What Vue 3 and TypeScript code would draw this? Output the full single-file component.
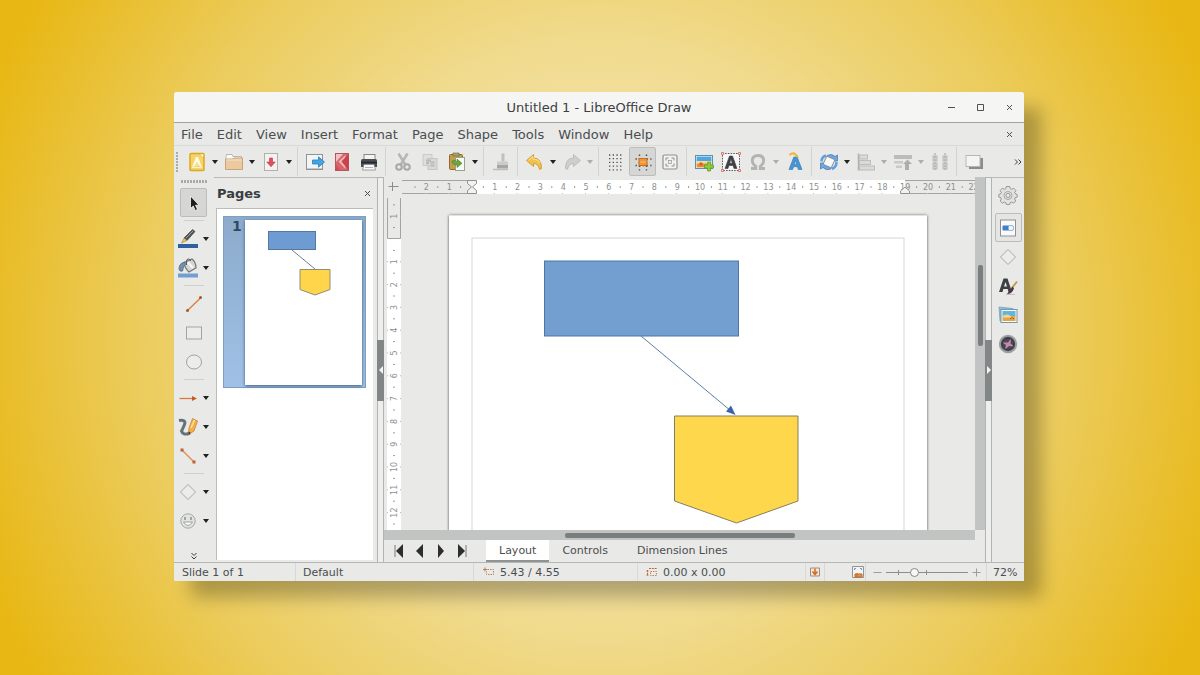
<script setup lang="ts">
import { ref } from 'vue'

interface Tool {
  id: string
  label: string
  menu?: boolean
  off?: boolean
  pressed?: boolean
}

const menus: string[] = ['File', 'Edit', 'View', 'Insert', 'Format', 'Page', 'Shape', 'Tools', 'Window', 'Help']

const toolGroups: Tool[][] = [
  [
    { id: 'new', label: 'New', menu: true },
    { id: 'open', label: 'Open', menu: true },
    { id: 'save', label: 'Save', menu: true },
  ],
  [
    { id: 'export', label: 'Export' },
    { id: 'pdf', label: 'Export as PDF' },
    { id: 'print', label: 'Print' },
  ],
  [
    { id: 'cut', label: 'Cut', off: true },
    { id: 'copy', label: 'Copy', off: true },
    { id: 'paste', label: 'Paste', menu: true },
  ],
  [{ id: 'clone', label: 'Clone Formatting', off: true }],
  [
    { id: 'undo', label: 'Undo', menu: true },
    { id: 'redo', label: 'Redo', menu: true, off: true },
  ],
  [
    { id: 'grid', label: 'Display Grid' },
    { id: 'snap', label: 'Helplines While Moving', pressed: true },
    { id: 'zoompan', label: 'Zoom and Pan' },
  ],
  [
    { id: 'image', label: 'Insert Image' },
    { id: 'textbox', label: 'Insert Text Box' },
    { id: 'omega', label: 'Special Character', menu: true, off: true },
    { id: 'fontwork', label: 'Fontwork' },
  ],
  [
    { id: 'transform', label: 'Transformations', menu: true },
    { id: 'align', label: 'Align', menu: true, off: true },
    { id: 'arrange', label: 'Arrange', menu: true, off: true },
    { id: 'distribute', label: 'Distribute', off: true },
  ],
  [{ id: 'shadow', label: 'Shadow' }],
]

const drawGroups: Tool[][] = [
  [{ id: 'select', label: 'Select', pressed: true }],
  [
    { id: 'pen', label: 'Line Color', menu: true },
    { id: 'fill', label: 'Fill Color', menu: true },
  ],
  [
    { id: 'line', label: 'Line' },
    { id: 'rect', label: 'Rectangle' },
    { id: 'ellipse', label: 'Ellipse' },
  ],
  [
    { id: 'arrow', label: 'Lines and Arrows', menu: true },
    { id: 'curve', label: 'Curves and Polygons', menu: true },
    { id: 'connector', label: 'Connectors', menu: true },
  ],
  [
    { id: 'diamond', label: 'Basic Shapes', menu: true },
    { id: 'smiley', label: 'Symbol Shapes', menu: true },
  ],
]

const decks: Tool[] = [
  { id: 'gear', label: 'Sidebar Settings' },
  { id: 'props', label: 'Properties', pressed: true },
  { id: 'diamond', label: 'Shapes' },
  { id: 'styles', label: 'Styles' },
  { id: 'gallery', label: 'Gallery' },
  { id: 'navigator', label: 'Navigator' },
]

const layers: string[] = ['Layout', 'Controls', 'Dimension Lines']
const activeLayer = ref('Layout')
const zoom = ref(33)

/* Inner markup of the 20x20 toolbar icons */
const icons: Record<string, string> = {
  new: '<rect x="3" y="1.500" width="14" height="17" rx="1" fill="#f6d468" stroke="#dca824" stroke-width="1.500"/><path d="M5 15.500 L9 5 h2 L15 15.500 L12.500 14 L10 10 L7.500 14z" fill="#fffbe8"/><path d="M7.500 14 L10 10 L12.500 14z" fill="#f9e18e"/><path d="M5 15.500h10" stroke="#fdf3c8"/><path d="M12.500 2h4v4z" fill="#fff" stroke="#dca824" stroke-width=".6"/>',
  open: '<path d="M2 4.500 L2.500 2.500 H8 L9 4.500 H17.500 V8 H2z" fill="#fafafa" stroke="#aaa" stroke-width=".8"/><path d="M1.500 7 H9 L10 6 H18.500 V17.500 H1.500z" fill="#ecca9f" stroke="#c9a478"/><path d="M2.500 8h15" stroke="#f8e2c6"/>',
  save: '<rect x="3.500" y="1.500" width="13" height="17" fill="#f2f2f1" stroke="#b0b0b0"/><path d="M8.500 6 h3v4h2.700L10 14.800 5.800 10H8.500z" fill="#dc5060" stroke="#c03a4c" stroke-width=".6"/>',
  export: '<rect x="1.500" y="2.500" width="16" height="15" fill="#f3f4f4" stroke="#8f9394"/><path d="M2 16.500h15" stroke="#c4c8ca"/><path d="M7.500 8h6V4.800L19.500 10l-6 5.200V12h-6z" fill="#45a3e2" stroke="#2a7fbc" stroke-width=".8"/>',
  pdf: '<rect x="3.500" y="1.500" width="13" height="17" fill="#d8636b" stroke="#b9525a"/><path d="M4 2h7L4 10z" fill="#efc3c4"/><path d="M13.500 3 L6.500 9.500 L13.500 17z" fill="#eeb4b6"/><path d="M16.500 2 L9.500 9.500 L16.500 18z" fill="#c8424e"/><path d="M4 13l4 5H4z" fill="#cf4f59"/>',
  print: '<rect x="5" y="2.500" width="11" height="6" fill="#f4f4f4" stroke="#888"/><path d="M2 8.500 Q2 7 3.500 7 h13 Q18 7 18 8.500 V15 H2z" fill="#474d50"/><path d="M2 10.500h16" stroke="#24282a" stroke-width="1.500"/><path d="M5 12.500h10l1.500 5.500h-13z" fill="#f8f8f8" stroke="#8c8c8c" stroke-width=".8"/><path d="M6 15.500h8" stroke="#b4b4b4"/>',
  cut: '<path d="M5.500 1.500 L12.500 13 M14.500 1.500 L7.500 13" stroke="#b6b6b5" stroke-width="2.500"/><circle cx="6" cy="15" r="2.800" fill="none" stroke="#a8a8a8" stroke-width="2"/><circle cx="14" cy="15" r="2.800" fill="none" stroke="#a8a8a8" stroke-width="2"/>',
  copy: '<rect x="3" y="2.500" width="9" height="11" fill="#dfdfde" stroke="#cacac9"/><rect x="8" y="6.500" width="9" height="11" fill="#d8d8d7" stroke="#c6c6c5"/><path d="M6 8.500h5M6 11h3M10.500 10.500h4M10.500 13.500h4" stroke="#b9b9b8" stroke-width="2"/>',
  paste: '<rect x="2.500" y="2.500" width="13" height="15" rx="1" fill="#c79b4e" stroke="#8d6b2c"/><rect x="6" y="1" width="6" height="3" fill="#a3a56a" stroke="#686a3a" stroke-width=".6"/><rect x="8.500" y="5.500" width="9" height="13" fill="#f7f9f4" stroke="#96a38c"/><path d="M5 9 q0 4 5 4 v2.500 l5-4.200 -5-4.200 v2.600 q-2 0-2-1.500z" fill="#6da63e" stroke="#4d8128" stroke-width=".6"/>',
  clone: '<path d="M12 1.500v8" stroke="#c0c0bf" stroke-width="3"/><path d="M6 9.500h11v4H6z" fill="#cbcbca"/><path d="M6 13h11v3.500H6z" fill="#a6a6a6"/><path d="M2 17.500h15" stroke="#bdbdbc" stroke-width="1.500"/>',
  undo: '<path d="M1.500 8.500 L8.500 2.500 V6 Q16.500 6 16.500 16.500 L14.500 17.500 Q13.500 11.500 8.500 11.500 V14.500z" fill="#f2c14a" stroke="#cf9a2c" stroke-width=".9"/><path d="M3.500 8.300 L8 4.500 V7.200 Q13 7 15 11" fill="none" stroke="#fbe3a0"/>',
  redo: '<path d="M18.500 8.500 L11.500 2.500 V6 Q3.500 6 3.500 16.500 L5.500 17.500 Q6.500 11.500 11.500 11.500 V14.500z" fill="#cdcecd" stroke="#bababa" stroke-width=".9"/>',
  grid: '<g stroke="#4c5052" stroke-width="1.300" stroke-dasharray="1.300 2.400"><path d="M3 3h14.500M3 6.700h14.500M3 10.400h14.500M3 14.100h14.500M3 17.800h14.500"/></g>',
  snap: '<g stroke="#4c5052" stroke-width="1.400" stroke-dasharray="1.400 2.300"><path d="M2.500 7h16M2.500 13.500h16M6.500 2.500v16M13.500 2.500v16"/></g><rect x="6" y="6.500" width="8" height="7" fill="#f0953a" stroke="#ca6e18"/><path d="M7.500 10h5" stroke="#f9c27e"/>',
  zoompan: '<rect x="3" y="3" width="14" height="14" rx="1.500" fill="#f2f2f1" stroke="#8e9294" stroke-width="1.200"/><path d="M6 8.500V6h2.500M11.500 6H14v2.500M14 11.500V14h-2.500M8.500 14H6v-2.500" fill="none" stroke="#8a8e90"/><rect x="8.500" y="8.500" width="3" height="3" fill="none" stroke="#9a9e9f" stroke-width=".8"/>',
  image: '<rect x="1.500" y="3.500" width="17" height="13" fill="#fff" stroke="#5d90b5"/><rect x="2.500" y="4.500" width="15" height="6" fill="#50a7de"/><path d="M2.500 9 h15 v3 h-15z" fill="#f4dca0"/><rect x="2.500" y="11.500" width="15" height="4" fill="#df9438"/><circle cx="7" cy="12" r="1.800" fill="#e15a26"/><path d="M13.500 10h3v3h3v3h-3v3h-3v-3h-3v-3h3z" fill="#8ccc3c" stroke="#5e9822" stroke-width=".7"/>',
  textbox: '<rect x="1.500" y="1.500" width="17" height="17" fill="#f7f7f7" stroke="#555" stroke-dasharray="1.500 1.200"/><path d="M4 16.500 L8.500 4 h3 L16 16.500 h-3 l-.9-3 H7.900 L7 16.500z M8.700 11.200h2.600L10 7z" fill="#3d4144" fill-rule="evenodd" stroke="#3d4144" stroke-width=".6"/><g fill="#f3eeee" stroke="#d25346"><circle cx="1.500" cy="1.500" r="1.200"/><circle cx="18.500" cy="1.500" r="1.200"/><circle cx="1.500" cy="18.500" r="1.200"/><circle cx="18.500" cy="18.500" r="1.200"/></g>',
  omega: '<path d="M3 16.500h4.800v-2.200Q4.300 12 4.300 8.800 4.300 3.500 10 3.500t5.700 5.300q0 3.200-3.500 5.500v2.200H17" fill="none" stroke="#b2b3b3" stroke-width="2.800"/>',
  fontwork: '<path d="M4 17.500 L8.800 5 h3.400 L17 17.500 h-3.700 l-.9-2.800 H8.500 L7.600 17.500z M9.300 12.300h2.300L10.500 8.600z" fill="#4795d4" fill-rule="evenodd" stroke="#2f78b4" stroke-width=".6"/><path d="M4.500 3 Q8 0 10.500 2.500 T13 5.500" fill="none" stroke="#f0b53c" stroke-width="2"/>',
  transform: '<path d="M2.500 9.500 Q2.500 5 7 3.500 M17.500 10 Q17.500 15 13 17" fill="none" stroke="#5f9fdf" stroke-width="2.500"/><path d="M8 3.500 Q13 1 16 4.500 L18.500 3 V9 H12.500 L14.500 6.500 Q12 4.500 8 6z" fill="#6ca8e4" stroke="#3b76b4" stroke-width=".7"/><path d="M12 17 Q7 19 4 15.500 L1.500 17 V11 H7.500 L5.500 13.500 Q8 15.500 12 14z" fill="#6ca8e4" stroke="#3b76b4" stroke-width=".7"/><rect x="5.500" y="5.500" width="9" height="9" rx="1" transform="rotate(25 10 10)" fill="#f8f8f8" stroke="#8e9496"/>',
  align: '<path d="M2.500 1.500v17" stroke="#b0b1b1" stroke-width="1.500"/><g fill="#dadad9" stroke="#bcbdbc"><rect x="3.500" y="3" width="8" height="4"/><rect x="3.500" y="8.500" width="11" height="4"/><rect x="3.500" y="14" width="15" height="4"/></g>',
  arrange: '<path d="M1 3h18v4H1z" fill="#bbbcbb"/><path d="M1 9h9v2.500H1zM3 13.500h6v2.500H3z" fill="#c9caca"/><path d="M12 18v-6h-2l4.500-4.500L19 12h-3v6z" fill="#acadad"/>',
  distribute: '<g fill="#cfcfce" stroke="#bbbcbb"><rect x="3" y="4" width="4" height="5"/><rect x="3" y="11" width="4" height="6"/><rect x="13" y="4" width="4" height="5"/><rect x="13" y="11" width="4" height="6"/></g><path d="M5 1v18M15 1v18" stroke="#b0b1b1" stroke-width="1.300" stroke-dasharray="2 1"/>',
  shadow: '<rect x="5" y="6" width="14" height="11" fill="#8a8d8e"/><rect x="2" y="3.500" width="14" height="11" fill="#f4f4f3" stroke="#b5b7b7"/>',
  select: '<path d="M6.500 3 V15.500 L9.300 13 L11.200 17.500 L13.500 16.500 L11.500 12.200 H15z" fill="#1c1e1f" stroke="#f8f8f8" stroke-width=".8"/>',
  pen: '<path d="M6 9 L14.500 .5 L17 2.500 L9 11.500z" fill="#53575a" stroke="#323638" stroke-width=".6"/><path d="M8 9 L15 2" stroke="#9a9ea0"/><path d="M6 9 L9 11.500 L3.500 14z" fill="#e5c25a" stroke="#8c7430" stroke-width=".5"/><rect x="0" y="15" width="20" height="4" fill="#2f61a0"/>',
  fill: '<path d="M6 4.500 L14 1 Q18 4 18 10 L11 14 Q6.500 10 6 4.500z" fill="#d3d5d6" stroke="#707476" stroke-width="1.200"/><path d="M10 4.500 L15 10" stroke="#f7f7f7" stroke-width="2.500"/><path d="M8.500 7V3Q8.500 1 10.500 1t2 2" fill="none" stroke="#5a5e60"/><path d="M1 11 Q1 5 7 4 L7.500 6.500 Q5 8 4.500 13 Q1.500 14 1 11z" fill="#7390ad" stroke="#56646f" stroke-width=".8"/><rect x="0" y="15.500" width="20" height="4" fill="#729fcf"/>',
  line: '<path d="M3.500 16.500 L17 3.500" stroke="#dc7c3c" stroke-width="1.300"/><circle cx="3.500" cy="16.500" r="1.500" fill="#a65530"/><circle cx="16.500" cy="3.500" r="1.500" fill="#a65530"/>',
  rect: '<rect x="2.500" y="4" width="15" height="12" fill="#ececeb" stroke="#a1a4a4"/>',
  ellipse: '<ellipse cx="10" cy="10" rx="7.500" ry="7" fill="#ececeb" stroke="#a1a4a4"/>',
  arrow: '<path d="M1.500 10.500h15" stroke="#dc7c3c" stroke-width="1.300"/><path d="M14 8l5 2.500-5 2.500z" fill="#c05d28"/>',
  curve: '<path d="M1 3.500 Q8.500 2.500 6.500 7.500 T3.500 14 Q5 19 12 16" fill="none" stroke="#66727a" stroke-width="3"/><path d="M14.500 1.500 L19.500 4 L16 14 L10.500 17.500 L11 11z" fill="#f2b044" stroke="#c47a2c" stroke-width=".7"/><path d="M13 11L16.500 3" stroke="#fcdf9a" stroke-width="1.500"/><path d="M10.500 17.500l.3-3 2 1.600z" fill="#333"/>',
  connector: '<path d="M4 4 L16 16" stroke="#e08a50" stroke-width="1.300"/><rect x="2.500" y="2.500" width="3" height="3" fill="#bd6334"/><rect x="14.500" y="14.500" width="3" height="3" fill="#bd6334"/>',
  diamond: '<path d="M10 2.500 L17.500 10 L10 17.500 L2.500 10z" fill="#ececeb" stroke="#a6a8a8"/>',
  smiley: '<circle cx="10" cy="10" r="7.200" fill="#e2e3e3" stroke="#a6a8a8"/><path d="M7 6v3M13 6v3" stroke="#8d9090" stroke-width="1.500"/><path d="M5.500 11q4.500 7 9 0z" fill="#fafafa" stroke="#8d9090" stroke-width=".8"/>',
  gear: '<path d="M8.300 1.500h3.400l.6 2.300 1.300.6 2.100-1.200 2.200 2.300-1.200 2 .5 1.300 2 .6v2.600l-2.100.7-.5 1.300 1.100 2-2.200 2.200-2-1.100-1.300.5-.5 1.900H8.300l-.6-1.900-1.300-.5-2 1.100L2.200 16l1.100-2-.5-1.300-2-.7V9.400l2-.6.6-1.300-1.200-2 2.200-2.300 2.100 1.200 1.200-.6z" fill="#e2e2e1" stroke="#949797"/><circle cx="10" cy="10.500" r="4" fill="none" stroke="#a4a7a7"/><circle cx="10" cy="10.500" r="2" fill="#f0f0f0" stroke="#949797"/>',
  props: '<rect x="2.500" y="2" width="15" height="16" fill="#f9f9f9" stroke="#8f9294"/><rect x="4.500" y="7.500" width="11" height="5" rx="1" fill="#3f80c8"/><rect x="10.500" y="8" width="4.500" height="4" rx="1" fill="#eef4fa"/>',
  styles: '<path d="M1 16 L5.500 2.500 h4 L14 16 h-3.500 l-.8-3 H5.300 L4.500 16z M6 10.500h3L7.500 6z" fill="#3d4144" fill-rule="evenodd"/><path d="M19 5.500 L14 12" stroke="#c49a4a" stroke-width="2"/><path d="M14.500 10.500 L9 18 q5 0 7-5.500z" fill="#4e3344"/><path d="M8 18.500h9" stroke="#d2b3ca"/>',
  gallery: '<path d="M1 2 L15 3.500 L14 14 L2 16z" fill="#8cc0dc" stroke="#6f9cb6" stroke-width=".7"/><rect x="3" y="4.500" width="16" height="13" fill="#fbfbf8" stroke="#7596a8"/><rect x="4.500" y="6" width="13" height="5.500" fill="#62b6dc"/><path d="M4.500 11h13v5h-13z" fill="#e2a648"/><path d="M4.500 11 q5-3 8 0 t5 0 v1.500 h-13z" fill="#f5d794"/><path d="M12 14q2-3 4 0" stroke="#b5552a" fill="none"/>',
  navigator: '<circle cx="10" cy="10" r="8.200" fill="#4a4857" stroke="#9da0a2" stroke-width="2"/><path d="M4.500 8.500 L10 8.500 L13 4.500 L12.500 9.500 L16 12.500 L11 12 L7 15.500 L8 11z" fill="#c58aa8"/><circle cx="10" cy="10" r="5.800" fill="none" stroke="#3a3846"/>',
}

/* Rulers: one unit is one centimetre */
const CM = 22.8
interface Mark {
  pos: number
  text: string
}
function marks(from: number, to: number, zero: number): Mark[] {
  const list: Mark[] = []
  for (let n = from; n <= to; n++) {
    if (n !== 0) list.push({ pos: zero + n * CM, text: String(Math.abs(n)) })
  }
  return list
}
function halves(from: number, to: number, zero: number): number[] {
  const list: number[] = []
  for (let n = from; n < to; n++) list.push(zero + (n + 0.5) * CM)
  return list
}
const hMarks = marks(-2, 22, 70)
const hHalves = halves(-3, 22, 70)
const vMarks = marks(-1, 12, 41)
const vHalves = halves(-2, 13, 41)
</script>

<template>
  <main class="desktop">
    <section class="window">
      <header class="titlebar">
        <h1>Untitled 1 - LibreOffice Draw</h1>
        <div class="controls">
          <button aria-label="Minimize"><svg viewBox="0 0 9 9"><path d="M1 4.500h7" /></svg></button>
          <button aria-label="Maximize"><svg viewBox="0 0 9 9"><path d="M1.500 1.500h6v6h-6z" /></svg></button>
          <button aria-label="Close"><svg viewBox="0 0 9 9"><path d="M2 2l5 5M7 2l-5 5" /></svg></button>
        </div>
      </header>

      <nav class="menubar">
        <button v-for="m in menus" :key="m">{{ m }}</button>
        <button class="doc-close" aria-label="Close Document">
          <svg viewBox="0 0 9 9"><path d="M2 2l5 5M7 2l-5 5" /></svg>
        </button>
      </nav>

      <div class="toolbar">
        <i class="grip"></i>
        <div v-for="(group, gi) in toolGroups" :key="gi" class="group">
          <template v-for="t in group" :key="t.id">
            <button class="tool" :class="{ pressed: t.pressed }" :aria-label="t.label">
              <svg viewBox="0 0 20 20" v-html="icons[t.id]"></svg>
            </button>
            <button v-if="t.menu" class="caret" :class="{ off: t.off }" :aria-label="t.label + ' options'"></button>
          </template>
        </div>
        <button class="more" aria-label="More tools">
          <svg viewBox="0 0 8 8"><path d="M1 1.500l2.500 2.500L1 6.500M4.500 1.500L7 4 4.500 6.500" /></svg>
        </button>
      </div>

      <div class="workspace">
        <aside class="drawbar">
          <i class="grip"></i>
          <div v-for="(group, gi) in drawGroups" :key="gi" class="group">
            <div v-for="t in group" :key="t.id" class="row" :class="{ split: t.menu }">
              <button class="tool" :class="{ pressed: t.pressed }" :aria-label="t.label">
                <svg viewBox="0 0 20 20" v-html="icons[t.id]"></svg>
              </button>
              <button v-if="t.menu" class="caret" :aria-label="t.label + ' options'"></button>
            </div>
          </div>
          <button class="more" aria-label="More drawing tools">
            <svg viewBox="0 0 8 8"><path d="M1.500 1l2.500 2.500L6.500 1M1.500 4.500L4 7l2.500-2.500" /></svg>
          </button>
        </aside>

        <section class="pages">
          <header>
            <h2>Pages</h2>
            <button aria-label="Close Pages"><svg viewBox="0 0 9 9"><path d="M2 2l5 5M7 2l-5 5" /></svg></button>
          </header>
          <div class="page-list">
            <button class="thumb" aria-label="Page 1">
              <span>1</span>
              <svg viewBox="0 0 117 165">
                <rect width="117" height="165" fill="#fff" />
                <rect x="23.500" y="11.500" width="47" height="18" fill="#6e9bd1" stroke="#54779f" />
                <path d="M47 30L70 49" stroke="#6c7f96" fill="none" />
                <path d="M55 49.500h30v20l-15 5.500-15-5.500z" fill="#fed54b" stroke="#8f8e74" />
              </svg>
            </button>
          </div>
        </section>

        <div class="splitter"><i class="grab left"></i></div>

        <section class="editor">
          <div class="sheet-area">
            <div class="corner"><svg viewBox="0 0 11 11"><path d="M.5 5.500h10M4.500 1v9" /></svg></div>
            <svg class="hruler">
              <rect x="70" y="0" width="433" height="14" fill="#fff" />
              <path d="M0 .5H70M0 13.500H70M503 .5H2000M503 13.500H2000" stroke="#a3a5a5" />
              <text v-for="m in hMarks" :key="m.pos" :x="m.pos" y="10">{{ m.text }}</text>
              <path v-for="p in hHalves" :key="p" :d="`M${p} 6v2`" stroke="#9a9c9c" />
              <path v-for="m in hMarks" :key="'q' + m.pos" :d="`M${m.pos - 0.5} 13v1`" stroke="#c4c6c6" />
              <path d="M65.500 .5h9v3l-4 3.500 4 3.500v3h-9v-3l4-3.500-4-3.500z" fill="#f2f2f1" stroke="#8f9191" />
              <path d="M503 7l4.500 4v2.500h-9V11z" fill="#f2f2f1" stroke="#8f9191" />
            </svg>
            <svg class="vruler">
              <rect x="0" y="41" width="14" height="2000" fill="#fff" />
              <path d="M.5 0V40.500H13.500V0" fill="none" stroke="#a3a5a5" />
              <text v-for="m in vMarks" :key="m.pos" :transform="`translate(10 ${m.pos}) rotate(-90)`">{{ m.text }}</text>
              <path v-for="p in vHalves" :key="p" :d="`M6 ${p}h2`" stroke="#9a9c9c" />
              <path v-for="m in vMarks" :key="'q' + m.pos" :d="`M0 ${m.pos}h1M13 ${m.pos}h1`" stroke="#b4b6b6" />
            </svg>
            <svg class="canvas">
              <defs>
                <filter id="page-shadow" x="-5%" y="-5%" width="110%" height="110%">
                  <feDropShadow dx="0" dy="0" stdDeviation="1.500" flood-color="#000" flood-opacity=".7" />
                </filter>
              </defs>
              <rect x="47" y="20.500" width="478" height="676" fill="#fff" filter="url(#page-shadow)" />
              <rect x="70" y="43" width="432" height="630" fill="none" stroke="#d4d5d5" />
              <rect x="142.500" y="66" width="194" height="75" fill="#729fcf" stroke="#4f75a5" />
              <path d="M239 141L329 216" stroke="#5d7ca6" fill="none" />
              <path d="M333.500 220l-9.500-3.500 5-6z" fill="#3a66a3" />
              <path d="M272.500 221h123.500v85L334.500 328l-62-22z" fill="#ffd74c" stroke="#857f62" />
            </svg>
          </div>
          <div class="vscroll"><i></i></div>
          <div class="hscroll"><i></i></div>
          <div class="tabs">
            <div class="nav">
              <button aria-label="First"><svg viewBox="0 0 12 14"><path class="bar" d="M2 1v12" /><path d="M10 0v14L3 7z" /></svg></button>
              <button aria-label="Previous"><svg viewBox="0 0 12 14"><path d="M9 0v14L2 7z" /></svg></button>
              <button aria-label="Next"><svg viewBox="0 0 12 14"><path d="M3 0v14l6-7z" /></svg></button>
              <button aria-label="Last"><svg viewBox="0 0 12 14"><path class="bar" d="M10 1v12" /><path d="M2 0v14l7-7z" /></svg></button>
            </div>
            <button
              v-for="l in layers"
              :key="l"
              class="tab"
              :class="{ active: l === activeLayer }"
              @click="activeLayer = l"
            >{{ l }}</button>
          </div>
        </section>

        <div class="splitter"><i class="grab right"></i></div>

        <aside class="sidebar">
          <button v-for="d in decks" :key="d.id" class="tool" :class="{ pressed: d.pressed }" :aria-label="d.label">
            <svg viewBox="0 0 20 20" v-html="icons[d.id]"></svg>
          </button>
        </aside>
      </div>

      <footer class="status">
        <span class="slide">Slide 1 of 1</span>
        <span class="style">Default</span>
        <span class="coord">
          <svg viewBox="0 0 12 10"><path d="M0 2.500h4M2 .5v4" stroke="#c87a4a" /><path d="M4.500 2.500h6v5h-7v-3" stroke="#b9866c" stroke-dasharray="1.500 1" /></svg>
          5.43 / 4.55
        </span>
        <span class="size">
          <svg viewBox="0 0 12 10"><path d="M3 1.500h8M1.500 3v6M.5 4h2M.5 8h2" stroke="#c8662c" stroke-dasharray="2 .8" /><path d="M4.500 4.500h6v4h-6z" stroke="#b9866c" stroke-dasharray="1.500 1" /></svg>
          0.00 x 0.00
        </span>
        <span class="mark">
          <svg viewBox="0 0 12 10"><path d="M1.500 1h9v8h-9z" fill="#f3e6da" stroke="#a68b76" /><path d="M6 1.500v5M3.500 4.500L6 7.500l2.500-3" stroke="#cf6c20" stroke-width="1.500" /></svg>
        </span>
        <span class="fit">
          <svg viewBox="0 0 12 12"><path d="M.5 .5h11v11H.5z" fill="#f4f4f4" stroke="#909496" /><path d="M2.500 4V2.500H4M8 2.500h1.500V4" stroke="#7d92a8" /><path d="M3 8h7v3H3zM5 7v4" fill="#e39248" stroke="#c26a28" /></svg>
        </span>
        <div class="zoom">
          <button aria-label="Zoom out"><svg viewBox="0 0 9 9"><path d="M.5 4.500h8" /></svg></button>
          <input v-model="zoom" type="range" min="0" max="100" aria-label="Zoom" />
          <button aria-label="Zoom in"><svg viewBox="0 0 9 9"><path d="M.5 4.500h8M4.500 .5v8" /></svg></button>
        </div>
        <span class="percent">72%</span>
      </footer>
    </section>
  </main>
</template>

<style>
body {
  margin: 0;
}
</style>

<style scoped>
.desktop {
  box-sizing: border-box;
  height: 100vh;
  min-height: 560px;
  padding: 92px 176px 94px 174px;
  display: flex;
  background: radial-gradient(circle at 50% 50%, #f8f0d4 0, #f0da8c 300px, #ebcb5a 470px, #e8b713 660px);
  font-family: 'DejaVu Sans', sans-serif;
  color: #4a4e50;
}
button {
  appearance: none;
  border: 0;
  margin: 0;
  padding: 0;
  background: none;
  font: inherit;
  color: inherit;
}
svg {
  display: block;
  fill: none;
}
.window {
  flex: 1;
  min-width: 0;
  display: flex;
  flex-direction: column;
  background: #e9e9e7;
  border-radius: 3px 3px 0 0;
  box-shadow: 17px 16px 18px rgba(0, 0, 0, 0.27);
}

/* title */
.titlebar {
  height: 30px;
  display: grid;
  grid-template-columns: 86px 1fr 86px;
  align-items: center;
  background: #f5f5f4;
  border-bottom: 1px solid #a0a29c;
  border-radius: 3px 3px 0 0;
}
h1 {
  grid-column: 2;
  margin: 0;
  text-align: center;
  font-size: 13px;
  font-weight: 400;
  color: #3c4042;
}
.controls {
  display: flex;
  gap: 20px;
}
.controls svg,
.doc-close svg,
.pages header svg {
  width: 9px;
  height: 9px;
  stroke: #4c5052;
}
.controls button:first-child {
  margin-left: 9px;
}

/* menu */
.menubar {
  height: 22px;
  display: flex;
  align-items: center;
  gap: 14px;
  padding: 0 10px 0 7px;
  border-bottom: 1px solid #d9d9d7;
  font-size: 13px;
}
.doc-close {
  margin-left: auto;
}

/* toolbar */
.toolbar {
  height: 31px;
  display: flex;
  align-items: center;
}
.toolbar > .grip {
  width: 4px;
  height: 20px;
  margin: 0 3px 0 2px;
  background: repeating-linear-gradient(#a9abab 0 2px, transparent 2px 3px) 0 0 / 2px 100% no-repeat;
}
.toolbar .group {
  display: flex;
  align-items: center;
}
.toolbar .group + .group {
  padding-left: 3px;
  margin-left: 3px;
  border-left: 1px solid #d3d3d1;
}
.tool {
  box-sizing: border-box;
  width: 27px;
  height: 29px;
  display: grid;
  place-items: center;
  border-radius: 2px;
}
.tool svg {
  width: 20px;
  height: 20px;
}
.tool.pressed {
  background: #d6d6d4;
  border: 1px solid #bcbdbb;
}
.caret {
  width: 10px;
  height: 29px;
  display: grid;
  place-items: center;
}
.caret::before {
  content: '';
  border: 3px solid transparent;
  border-top: 4px solid #1f2122;
  border-bottom: 0;
}
.caret.off::before {
  border-top-color: #acadad;
}
.more svg {
  width: 8px;
  height: 8px;
  stroke: #3a3e40;
}
.toolbar .more {
  margin: 0 2px 0 auto;
}

/* workspace */
.workspace {
  flex: 1;
  min-height: 0;
  display: flex;
  border-bottom: 1px solid #b6b7b5;
}
.drawbar {
  width: 40px;
  display: flex;
  flex-direction: column;
}
.drawbar > .grip {
  width: 26px;
  height: 3px;
  margin: 3px 6px 5px 7px;
  background: repeating-linear-gradient(90deg, #a9abab 0 2px, transparent 2px 3px);
}
.drawbar .group + .group {
  padding-top: 7px;
  background: linear-gradient(#cfcfcd, #cfcfcd) 10px 3px / 20px 1px no-repeat;
}
.row {
  display: flex;
  padding-left: 6px;
}
.row.split {
  padding-left: 0;
}
.drawbar .more {
  display: grid;
  place-items: center;
  margin-top: auto;
  padding-bottom: 2px;
}

.pages {
  width: 163px;
  display: flex;
  flex-direction: column;
  border-top: 1px solid #b9bab8;
}
.pages header {
  height: 30px;
  display: flex;
  align-items: center;
  justify-content: space-between;
  padding: 0 5px 0 3px;
}
h2 {
  margin: 0;
  font-size: 13px;
  font-weight: 700;
  color: #393d3f;
}
.page-list {
  flex: 1;
  margin: 0 4px 2px 2px;
  padding: 7px 7px 0 6px;
  background: #fff;
  border: solid #bcbdbb;
  border-width: 1px 0 0 1px;
}
.thumb {
  box-sizing: border-box;
  width: 100%;
  display: flex;
  justify-content: space-between;
  align-items: flex-start;
  padding: 3px 3px 2px 8px;
  border: 1px solid #7f9fc2;
  background: linear-gradient(#8cabcc, #a0c1e6);
  font-size: 14px;
  line-height: 12px;
  font-weight: 700;
  color: #32495f;
}
.thumb svg {
  width: 117px;
  box-shadow: 0 1px 3px #385678;
}

.splitter {
  width: 5px;
  display: flex;
  align-items: center;
  border: 1px solid #b2b4b3;
  border-bottom: 0;
  background: #eeeeed;
}
.grab {
  height: 61px;
  margin: 0 -1px;
  flex: 1;
  display: grid;
  place-items: center;
  background: #828687;
}
.grab::before {
  content: '';
  border: 4px solid transparent;
}
.grab.left::before {
  border-right-color: #f4f4f4;
  border-left: 0;
}
.grab.right::before {
  border-left-color: #f4f4f4;
  border-right: 0;
}

/* editor */
.editor {
  flex: 1;
  min-width: 0;
  display: grid;
  grid-template-columns: minmax(0, 1fr) 10px;
  grid-template-rows: minmax(0, 1fr) 10px 22px;
}
.sheet-area {
  min-height: 0;
  display: grid;
  grid-template-columns: 18px minmax(0, 1fr);
  grid-template-rows: 18px minmax(0, 1fr);
}
.corner {
  padding: 4px 0 0 4px;
}
.corner svg {
  width: 11px;
  height: 11px;
  stroke: #8c8e8e;
}
.hruler {
  width: 100%;
  height: 14px;
  margin-top: 3px;
}
.hruler text,
.vruler text {
  font-size: 8px;
  fill: #8d9090;
  text-anchor: middle;
}
.vruler {
  width: 14px;
  height: calc(100% - 3px);
  margin: 3px 0 0 3px;
}
.canvas {
  width: 100%;
  height: 100%;
}
.vscroll {
  display: flex;
  justify-content: center;
  background: #c1c4c3;
}
.vscroll i {
  width: 5px;
  height: 23%;
  margin-top: 88px;
  border-radius: 2px;
  background: #7a7e7e;
}
.hscroll {
  display: flex;
  align-items: center;
  background: #c1c4c3;
}
.hscroll i {
  width: 39%;
  height: 5px;
  margin-left: 181px;
  border-radius: 2px;
  background: #7a7e7e;
}
.tabs {
  grid-column: 1 / 3;
  display: flex;
  font-size: 11px;
}
.nav {
  width: 102px;
  display: flex;
  align-items: center;
  gap: 9px;
  padding-left: 9px;
  box-sizing: border-box;
}
.nav svg {
  width: 12px;
  height: 14px;
  fill: #2c2f30;
}
.nav .bar {
  stroke: #777b7c;
}
.tab {
  padding: 0 13px;
  border-bottom: 2px solid transparent;
}
.tab.active {
  background: #fff;
  border-bottom-color: #8f9393;
}
.tab + .tab + .tab {
  margin-left: 3px;
}

/* sidebar */
.sidebar {
  width: 32px;
  display: flex;
  flex-direction: column;
  align-items: center;
  padding-top: 2px;
  border-top: 1px solid #b9bab8;
}
.sidebar .tool:first-child {
  margin-bottom: 4px;
}
.sidebar .tool.pressed {
  background: #e5e5e3;
}

/* status */
.status {
  height: 18px;
  display: flex;
  align-items: stretch;
  font-size: 11px;
}
.status > span {
  display: flex;
  align-items: center;
  gap: 5px;
  box-sizing: border-box;
  border-right: 1px solid #d8d8d6;
}
.status svg {
  width: 12px;
}
.slide {
  width: 122px;
  padding-left: 8px;
}
.style {
  width: 178px;
  padding-left: 7px;
}
.coord {
  width: 164px;
  padding-left: 9px;
}
.size {
  flex: 1;
  padding-left: 8px;
}
.mark {
  width: 19px;
  padding-left: 3px;
}
.fit {
  width: 41px;
  padding-left: 27px;
}
.zoom {
  display: flex;
  align-items: center;
  gap: 4px;
  padding: 0 5px 0 7px;
}
.zoom svg {
  width: 9px;
  height: 9px;
  stroke: #9b9e9e;
}
input[type='range'] {
  appearance: none;
  width: 82px;
  height: 10px;
  margin: 0;
  background:
    linear-gradient(#8b8f8f, #8b8f8f) 12px 50% / 1px 5px no-repeat,
    linear-gradient(#8b8f8f, #8b8f8f) 40px 50% / 1px 5px no-repeat,
    linear-gradient(#8b8f8f, #8b8f8f) 0 50% / 100% 1px no-repeat;
}
input[type='range']::-webkit-slider-thumb {
  appearance: none;
  width: 9px;
  height: 9px;
  border: 1px solid #858989;
  border-radius: 50%;
  background: #f7f7f6;
}
.status > .percent {
  width: 38px;
  padding-left: 6px;
  border-left: 1px solid #d8d8d6;
  border-right: 0;
}
</style>
